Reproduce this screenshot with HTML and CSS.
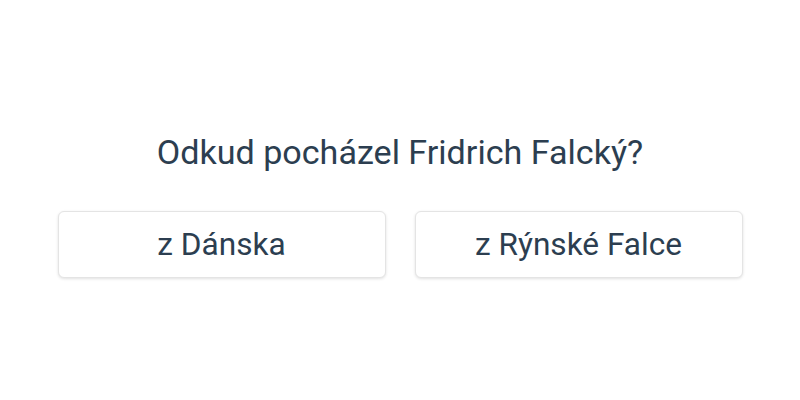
FILE: index.html
```html
<!DOCTYPE html>
<html lang="cs">
<head>
<meta charset="utf-8">
<link rel="stylesheet" href="styles.css">
</head>
<body>
<main class="quiz">
  <h1 class="question">Odkud pocházel Fridrich Falcký?</h1>
  <div class="answers">
    <button class="answer">z Dánska</button>
    <button class="answer">z Rýnské Falce</button>
  </div>
</main>
</body>
</html>
```

FILE: styles.css
```css
html, body {
  margin: 0;
  padding: 0;
  background: #ffffff;
}
body {
  font-family: Roboto, "Liberation Sans", sans-serif;
  color: #2c3e50;
}
.quiz {
  height: 400px;
  display: flex;
  flex-direction: column;
  align-items: center;
  padding-top: 131px;
  box-sizing: border-box;
}
.question {
  margin: 0;
  font-size: 34.1px;
  font-weight: 400;
  line-height: 42px;
}
.answers {
  margin-top: 38px;
  display: grid;
  grid-template-columns: 328px 328px;
  gap: 29px;
}
.answer {
  height: 67px;
  padding: 0;
  background: #ffffff;
  border: 1px solid #e4e4e4;
  border-radius: 6px;
  box-shadow: 0 1px 3px rgba(0,0,0,0.12);
  font-family: Roboto, "Liberation Sans", sans-serif;
  font-size: 31.6px;
  color: #2c3e50;
  cursor: pointer;
}
```
